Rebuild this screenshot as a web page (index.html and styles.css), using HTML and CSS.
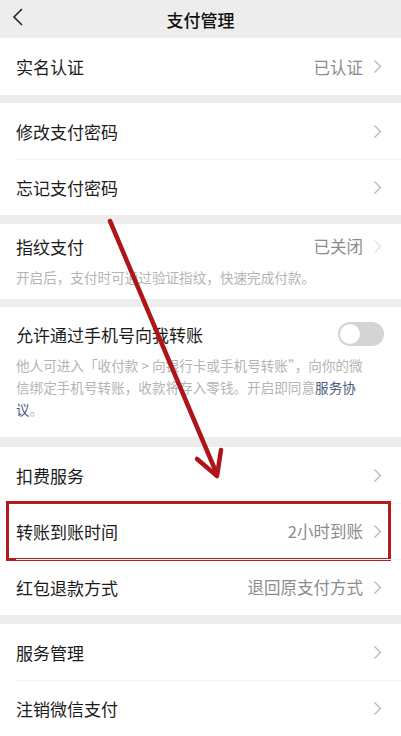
FILE: index.html
```html
<!DOCTYPE html>
<html lang="zh-CN">
<head>
    <meta charset="UTF-8">
    <meta name="viewport" content="width=device-width, initial-scale=1.0">
    <title>支付管理</title>
    <link rel="stylesheet" href="styles.css">
</head>
<body>
    <div class="page">
        <header class="topbar">
            <svg class="back" width="12" height="20" viewBox="0 0 12 20"><polyline points="10,2 2,10 10,18" fill="none" stroke="#222" stroke-width="1.6"/></svg>
            <h1>支付管理</h1>
        </header>

        <section class="group">
            <div class="row row-first">
                <span class="label">实名认证</span>
                <span class="value">已认证</span>
                <svg class="chev" width="9" height="15" viewBox="0 0 9 15"><polyline points="1.5,1.5 7.5,7.5 1.5,13.5" fill="none" stroke="#b5b5b5" stroke-width="1.3"/></svg>
            </div>
        </section>

        <section class="group gap-8">
            <div class="row">
                <span class="label">修改支付密码</span>
                <svg class="chev" width="9" height="15" viewBox="0 0 9 15"><polyline points="1.5,1.5 7.5,7.5 1.5,13.5" fill="none" stroke="#b5b5b5" stroke-width="1.3"/></svg>
            </div>
            <div class="row">
                <span class="label">忘记支付密码</span>
                <svg class="chev" width="9" height="15" viewBox="0 0 9 15"><polyline points="1.5,1.5 7.5,7.5 1.5,13.5" fill="none" stroke="#b5b5b5" stroke-width="1.3"/></svg>
            </div>
        </section>

        <section class="group gap-9 block fingerprint">
            <div class="block-head">
                <span class="label">指纹支付</span>
                <span class="value">已关闭</span>
                <svg class="chev" width="9" height="15" viewBox="0 0 9 15"><polyline points="1.5,1.5 7.5,7.5 1.5,13.5" fill="none" stroke="#e2e2e2" stroke-width="1.3"/></svg>
            </div>
            <p class="desc">开启后，支付时可通过验证指纹，快速完成付款。</p>
        </section>

        <section class="group gap-8 block phone">
            <div class="block-head">
                <span class="label">允许通过手机号向我转账</span>
                <span class="toggle"><span class="knob"></span></span>
            </div>
            <p class="desc">他人可进入「收付款 &gt; 向银行卡或手机号转账”，向你的微信绑定手机号转账，收款将存入零钱。开启即同意<a class="link">服务协议</a>。</p>
        </section>

        <section class="group gap-10">
            <div class="row">
                <span class="label">扣费服务</span>
                <svg class="chev" width="9" height="15" viewBox="0 0 9 15"><polyline points="1.5,1.5 7.5,7.5 1.5,13.5" fill="none" stroke="#b5b5b5" stroke-width="1.3"/></svg>
            </div>
            <div class="row marked">
                <span class="label">转账到账时间</span>
                <span class="value">2小时到账</span>
                <svg class="chev" width="9" height="15" viewBox="0 0 9 15"><polyline points="1.5,1.5 7.5,7.5 1.5,13.5" fill="none" stroke="#b5b5b5" stroke-width="1.3"/></svg>
                <span class="mark-box"></span>
            </div>
            <div class="row">
                <span class="label">红包退款方式</span>
                <span class="value">退回原支付方式</span>
                <svg class="chev" width="9" height="15" viewBox="0 0 9 15"><polyline points="1.5,1.5 7.5,7.5 1.5,13.5" fill="none" stroke="#b5b5b5" stroke-width="1.3"/></svg>
            </div>
        </section>

        <section class="group gap-9">
            <div class="row">
                <span class="label">服务管理</span>
                <svg class="chev" width="9" height="15" viewBox="0 0 9 15"><polyline points="1.5,1.5 7.5,7.5 1.5,13.5" fill="none" stroke="#b5b5b5" stroke-width="1.3"/></svg>
            </div>
            <div class="row">
                <span class="label">注销微信支付</span>
                <svg class="chev" width="9" height="15" viewBox="0 0 9 15"><polyline points="1.5,1.5 7.5,7.5 1.5,13.5" fill="none" stroke="#b5b5b5" stroke-width="1.3"/></svg>
            </div>
        </section>

        <!-- hand-drawn annotation arrow -->
        <svg class="arrow" width="401" height="736" viewBox="0 0 401 736">
            <line x1="110" y1="221" x2="216" y2="472" stroke="#ad1519" stroke-width="4.5" stroke-linecap="round"/>
            <polyline points="197,459 217,476 221,450" fill="none" stroke="#ad1519" stroke-width="4.5" stroke-linecap="round" stroke-linejoin="round"/>
        </svg>
    </div>
</body>
</html>
```

FILE: styles.css
```css
body {
    margin: 0;
    padding: 0;
    background: #ededed;
    font-family: "Noto Sans CJK SC", "Noto Sans", sans-serif;
    color: #1b1b1b;
}

.page {
    position: relative;
    width: 401px;
    height: 736px;
    overflow: hidden;
}

.topbar {
    height: 38px;
    display: flex;
    align-items: center;
    justify-content: center;
    position: relative;
}

.topbar h1 {
    margin: 0;
    font-size: 17px;
    font-weight: 500;
    color: #111;
}

.back {
    position: absolute;
    left: 12px;
    top: 7px;
}

.group {
    background: #fff;
}

.gap-8 { margin-top: 8px; }
.gap-9 { margin-top: 9px; }
.gap-10 { margin-top: 10px; }

.row {
    position: relative;
    height: 56px;
    display: flex;
    align-items: center;
    padding: 0 19px 0 16px;
}

.row-first {
    height: 57px;
}

.row + .row::before {
    content: "";
    position: absolute;
    top: 0;
    left: 16px;
    right: 0;
    height: 1px;
    background: #f1f1f1;
}

.label {
    flex: 1;
    font-size: 17px;
    color: #1b1b1b;
}

.value {
    font-size: 16.5px;
    color: #8c8c8c;
    margin-right: 10px;
}

.chev {
    display: block;
}

.block {
    padding: 0 19px 0 16px;
}

.block-head {
    display: flex;
    align-items: center;
}

.fingerprint {
    padding-top: 11px;
    padding-bottom: 11px;
}

.fingerprint .block-head {
    height: 22px;
}

.fingerprint .desc {
    margin-top: 10px;
}

.phone {
    padding-top: 15px;
    padding-bottom: 17px;
    padding-right: 17px;
}

.phone .block-head {
    height: 24px;
}

.phone .desc {
    margin-top: 8px;
    padding-right: 12px;
    line-height: 22px;
}

.desc {
    margin: 0;
    font-size: 13.6px;
    line-height: 21px;
    color: #b4b4b4;
}

.link {
    color: #4c5a7e;
}

.toggle {
    width: 46px;
    height: 24px;
    border-radius: 12px;
    background: #d4d4d4;
    display: flex;
    align-items: center;
    padding: 0 2px;
    box-sizing: border-box;
}

.knob {
    width: 20px;
    height: 20px;
    border-radius: 50%;
    background: #fff;
}

.mark-box {
    position: absolute;
    left: 6px;
    right: 10px;
    top: -2px;
    bottom: -2px;
    border: 3px solid #b71a1d;
}

.arrow {
    position: absolute;
    top: 0;
    left: 0;
    pointer-events: none;
}
```
